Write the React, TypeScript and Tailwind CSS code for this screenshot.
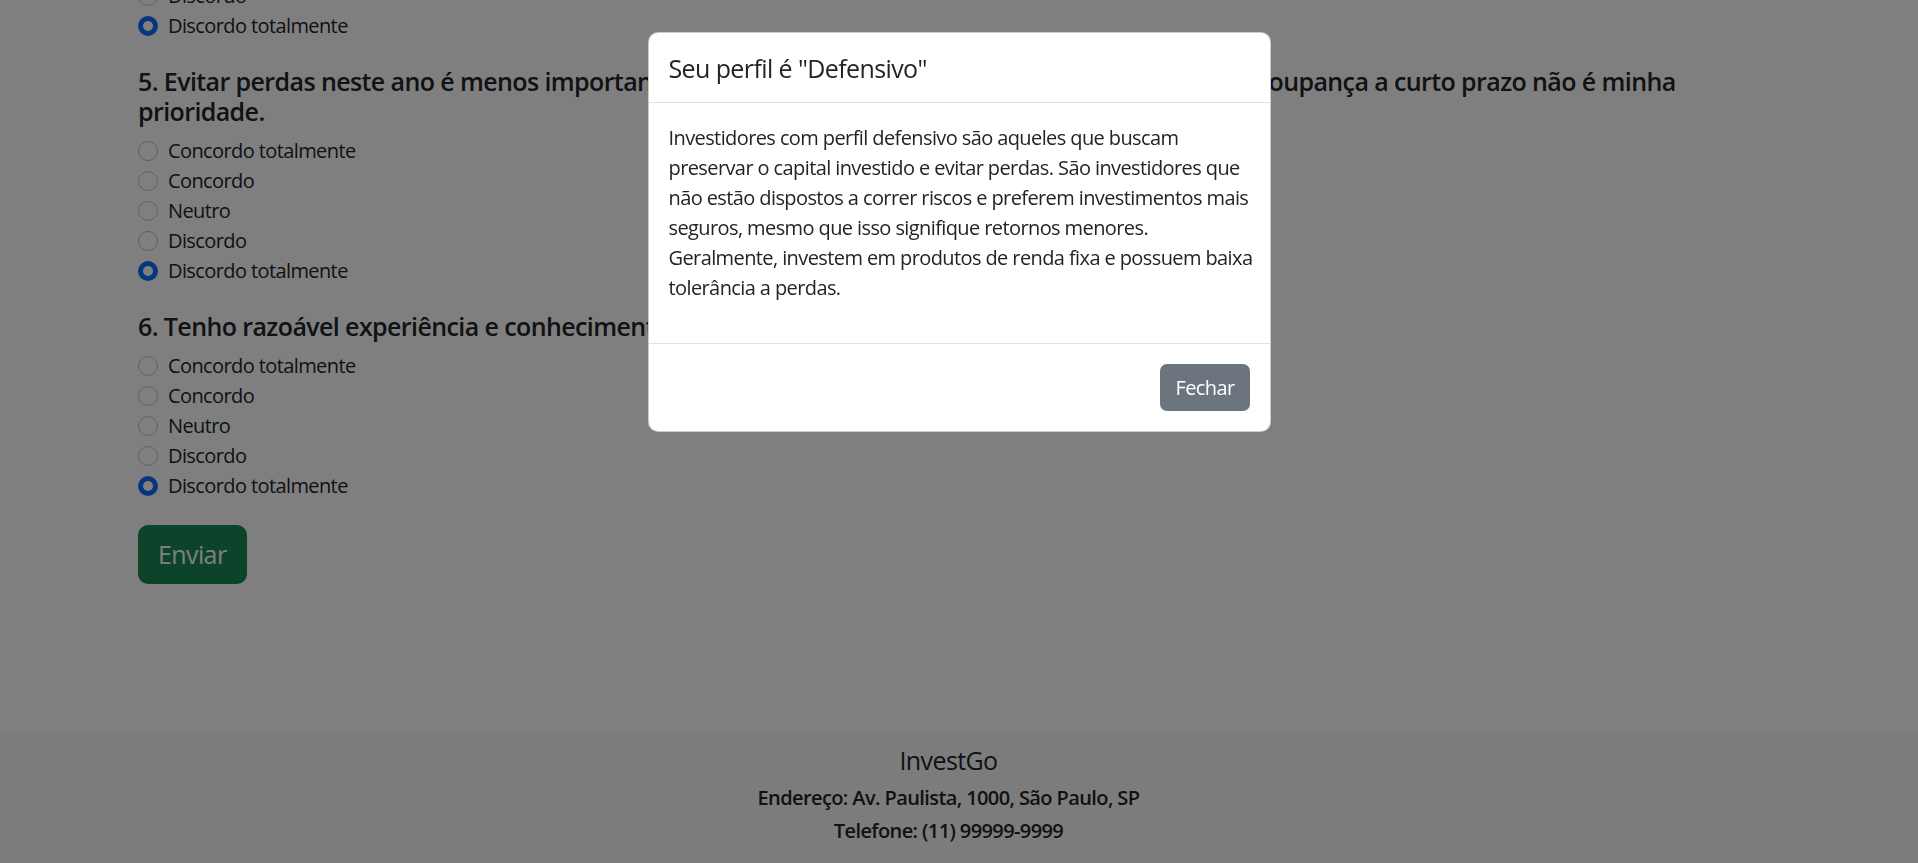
import React from "react";

const options = ["Concordo totalmente", "Concordo", "Neutro", "Discordo", "Discordo totalmente"];

const Radio = ({ label, checked }: { label: string; checked?: boolean }) => (
  <div className="flex items-center h-[30px]">
    {checked ? (
      <span className="w-5 h-5 rounded-full bg-[#0d6efd] flex items-center justify-center">
        <span className="w-[10px] h-[10px] rounded-full bg-white" />
      </span>
    ) : (
      <span className="w-5 h-5 rounded-full border border-[#bfbfbf] bg-white" />
    )}
    <span className="ml-[10px] text-[20px] leading-[30px]">{label}</span>
  </div>
);

const Question = ({ title, selected }: { title: React.ReactNode; selected: number }) => (
  <div>
    <h5 className="text-[25px] leading-[30px] font-semibold mb-[10px]">{title}</h5>
    {options.map((o, i) => (
      <Radio key={i} label={o} checked={i === selected} />
    ))}
  </div>
);

export default function App() {
  return (
    <div className="relative h-[863px] overflow-hidden bg-white text-[#212529] tracking-[-0.6px] font-['Open_Sans',sans-serif]">
      <main className="px-[138px] -mt-[19px]">
        <Radio label="Discordo" />
        <Radio label="Discordo totalmente" checked />
        <div className="mt-[25px]">
          <Question
            title={
              <>
                5. Evitar perdas neste ano é menos importante do que fazer o meu patrimônio crescer muito, e a poupança a curto prazo não é minha
                <br />
                prioridade.
              </>
            }
            selected={4}
          />
        </div>
        <div className="mt-[25px]">
          <Question title="6. Tenho razoável experiência e conhecimento em investimentos." selected={4} />
        </div>
        <button className="mt-[24px] h-[59px] px-[20px] rounded-[10px] bg-[#198754] text-white text-[25px] leading-[37px]">
          Enviar
        </button>
      </main>

      <footer className="mt-[147px] bg-[#f8f9fa] pt-[14px] pb-[20px] pr-[21px] text-center">
        <h5 className="text-[25px] leading-[30px] font-medium">InvestGo</h5>
        <p className="mt-[8px] text-[20px] leading-[30px] font-semibold">Endereço: Av. Paulista, 1000, São Paulo, SP</p>
        <p className="mt-[3px] text-[20px] leading-[30px] font-semibold">Telefone: (11) 99999-9999</p>
      </footer>

      {/* modal + backdrop */}
      <div className="fixed inset-0 bg-black/50 flex justify-center items-start pt-[32px]">
        <div className="w-[623px] bg-white rounded-[10px] border border-black/20">
          <div className="h-[70px] px-5 flex items-center border-b border-[#dee2e6]">
            <h5 className="text-[25px] leading-[30px] font-medium">Seu perfil é "Defensivo"</h5>
          </div>
          <div className="px-5 pt-5 pb-5">
            <p className="text-[20px] leading-[30px] mb-5 whitespace-nowrap">
              Investidores com perfil defensivo são aqueles que buscam
              <br />
              preservar o capital investido e evitar perdas. São investidores que
              <br />
              não estão dispostos a correr riscos e preferem investimentos mais
              <br />
              seguros, mesmo que isso signifique retornos menores.
              <br />
              Geralmente, investem em produtos de renda fixa e possuem baixa
              <br />
              tolerância a perdas.
            </p>
          </div>
          <div className="border-t border-[#dee2e6] p-[15px] flex justify-end">
            <button className="m-[5px] px-[15px] h-[47px] rounded-[7px] bg-[#6c757d] text-white text-[20px] leading-[30px]">
              Fechar
            </button>
          </div>
        </div>
      </div>
    </div>
  );
}
